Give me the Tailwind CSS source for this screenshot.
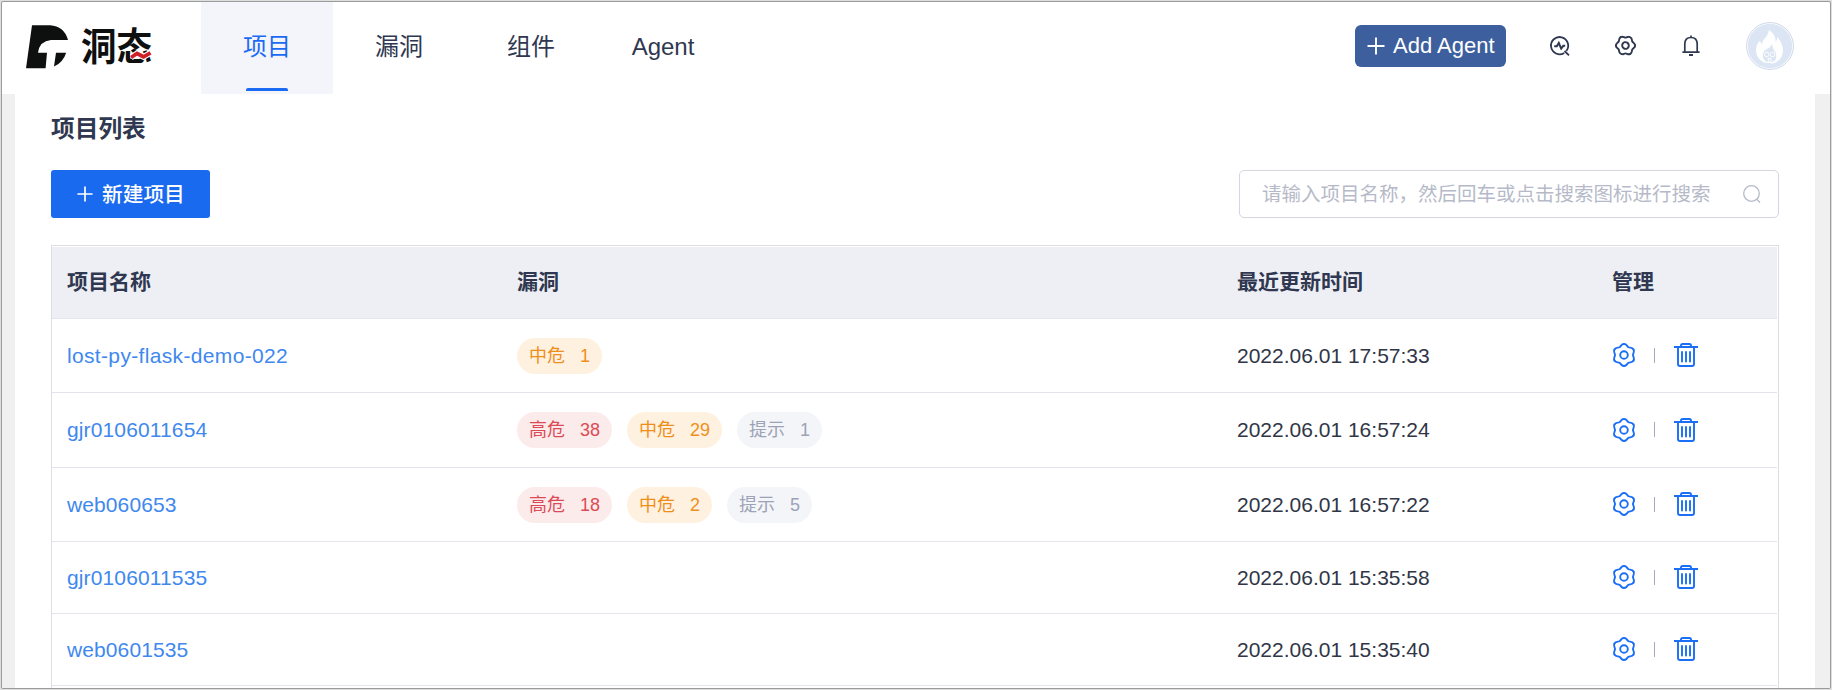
<!DOCTYPE html>
<html lang="zh-CN">
<head>
<meta charset="utf-8">
<title>洞态</title>
<script src="https://cdn.jsdelivr.net/npm/@tailwindcss/browser@4"></script>
</head>
<body class="h-[690px] w-[1832px] overflow-hidden bg-[#dedede] p-px font-['Liberation_Sans','Noto_Sans_CJK_SC',sans-serif] text-[#2f3850]">
<svg class="hidden">
  <symbol id="gear" viewBox="-12 -12 24 24"><g fill="none" stroke="currentColor" stroke-linecap="round">
    <path d="M0 -11C2.9 -11 2.94 -8.69 4.5 -7.79C6.06 -6.89 8.08 -8.01 9.53 -5.5"/>
    <path transform="rotate(60)" d="M0 -11C2.9 -11 2.94 -8.69 4.5 -7.79C6.06 -6.89 8.08 -8.01 9.53 -5.5"/>
    <path transform="rotate(120)" d="M0 -11C2.9 -11 2.94 -8.69 4.5 -7.79C6.06 -6.89 8.08 -8.01 9.53 -5.5"/>
    <path transform="rotate(180)" d="M0 -11C2.9 -11 2.94 -8.69 4.5 -7.79C6.06 -6.89 8.08 -8.01 9.53 -5.5"/>
    <path transform="rotate(240)" d="M0 -11C2.9 -11 2.94 -8.69 4.5 -7.79C6.06 -6.89 8.08 -8.01 9.53 -5.5"/>
    <path transform="rotate(300)" d="M0 -11C2.9 -11 2.94 -8.69 4.5 -7.79C6.06 -6.89 8.08 -8.01 9.53 -5.5"/>
    <circle r="3.8"/></g></symbol>
  <symbol id="trash" viewBox="0 0 26 26"><g fill="none" stroke="currentColor" stroke-width="1.9"><path d="M1 5H25M8 5V3.6Q8 2 9.6 2H16.4Q18 2 18 3.6V5M5 5V22Q5 24 7 24H19Q21 24 21 22V5"/><path d="M9 10V19.500M13 10V19.500M17 10V19.500" stroke-linecap="round"/></g></symbol>
  <symbol id="plus" viewBox="0 0 18 18"><path d="M9 .5V17.5M.5 9H17.5" fill="none" stroke="currentColor" stroke-width="1.9"/></symbol>
</svg>
<div class="flex h-[688px] flex-col overflow-hidden rounded-[2px] border border-[#9b9b9b] bg-white">
  <header class="flex h-[92px] shrink-0 items-center">
    <div class="mb-[3px] flex w-[199px] shrink-0 items-center pl-6">
      <svg class="h-11 w-[43px] shrink-0" viewBox="26 24 43 44" fill="#0d100f"><path d="M32 24.3H50Q64 25 68 39H51Q39.5 40 38 51.7H47L45.6 67.3H26Z"/><path d="M56 51.7H66.2Q63 61.5 54 65.6Z"/></svg>
      <div class="relative ml-3 h-11 w-[74px]">
        <div class="origin-center scale-y-[1.06] text-[35.5px] leading-[44px] font-bold whitespace-nowrap text-[#0d100f]">洞态</div>
        <svg class="absolute top-[25px] left-[49px] h-[10px] w-[22px]" viewBox="0 0 22 10"><path d="M1 7.5L7 3.5L13.5 6.8L20.5 2.8" fill="none" stroke="#fff" stroke-width="6"/><path d="M1 7.5L7 3.5L13.5 6.8L20.5 2.8" fill="none" stroke="#cf2029" stroke-width="3.8"/></svg>
      </div>
    </div>
    <nav class="flex h-full text-2xl">
      <a class="relative flex w-[132px] items-center justify-center bg-[#f4f5fa] pb-0.5 text-[#1a6af4]">项目<span class="absolute bottom-[3px] left-[45px] h-[3px] w-[42px] rounded-t-[2px] bg-[#1a6af4]"></span></a>
      <a class="flex w-[132px] items-center justify-center pb-0.5">漏洞</a>
      <a class="flex w-[132px] items-center justify-center pb-0.5">组件</a>
      <a class="flex w-[132px] items-center justify-center pb-0.5">Agent</a>
    </nav>
    <div class="mr-9 mb-[5px] ml-auto flex items-center">
      <button class="flex h-[42px] w-[151px] items-center rounded-md bg-[#3d5f9e] pl-3 text-[22px] whitespace-nowrap text-white"><svg class="mr-2 h-[18px] w-[18px] shrink-0"><use href="#plus"/></svg>Add Agent</button>
      <svg class="ml-[42px] h-6 w-6" viewBox="0 0 24 24" fill="none" stroke="currentColor" stroke-width="1.8"><path d="M16.2 18.9A8.6 8.6 0 1 1 18.4 16.9M16.5 17L21 21.3"/><path d="M6.2 12.3H8.8L10.8 9L13.2 14.6L15.3 11.8H17.2" stroke-width="2"/></svg>
      <svg class="ml-[43px] h-[21px] w-[21px] rotate-30 stroke-[2.2]"><use href="#gear"/></svg>
      <svg class="ml-[43px] h-6 w-6" viewBox="0 0 24 24" fill="none" stroke="currentColor" stroke-width="1.7"><path d="M3.4 18.2H20.6M5.8 18V10Q5.8 3.5 12 3.5T18.2 10V18M12 3.5V1.6"/><path d="M10 21.1H14" stroke-width="2"/></svg>
      <svg class="ml-[43px] h-12 w-12" viewBox="0 0 48 48"><circle cx="24" cy="24" r="23.4" fill="#fff" stroke="#ccd7e9"/><circle cx="24" cy="24" r="22.2" fill="#dbe5f3"/><path d="M23 8C28 12 30 15 29.5 20Q31.3 18.5 31.3 15Q36.5 21 37 28Q37 38 27 41.5L18 40.5Q9.500 36 10 27.500Q10.500 22 14 18.500Q14.500 21 16 22C17 16 22 15 23 8Z" fill="#fff"/><path d="M26 22Q27 28 30 31Q32 40 23.500 40.500Q15.500 39 17 31.500Q18 28 21 27Q25 25 26 22Z" fill="#dbe5f3"/><g fill="none" stroke="#fff" stroke-width=".9"><circle cx="20.800" cy="32.500" r="2.300"/><circle cx="26.500" cy="32.500" r="2.300"/><path d="M22.300 36.500H25V40H22.300Z"/></g></svg>
    </div>
  </header>
  <main class="mr-[15px] ml-[13px] min-h-0 flex-1 bg-white px-9 shadow-[-13px_0_0_#f0f0f0,15px_0_0_#f0f0f0]">
    <h1 class="pt-[18px] text-[23.7px] leading-[34px] font-bold">项目列表</h1>
    <div class="mt-6 flex justify-between">
      <button class="flex h-12 w-[159px] items-center rounded-[3px] bg-[#1a6af0] pl-[26px] text-[20.7px] font-medium whitespace-nowrap text-white"><svg class="mr-[9px] h-4 w-4 shrink-0"><use href="#plus"/></svg><span class="pt-px">新建项目</span></button>
      <div class="flex h-12 w-[540px] items-center rounded-[5px] border border-[#d4d6e0] pl-[22px] text-[19.5px] text-[#b6bac8]"><span class="pt-0.5">请输入项目名称，然后回车或点击搜索图标进行搜索</span><svg class="mr-4 ml-auto h-5 w-5" viewBox="0 0 20 20" fill="none" stroke="currentColor" stroke-width="1.3"><circle cx="9.500" cy="9.500" r="7.800"/><path d="M14.500 15L18 18.500"/></svg></div>
    </div>
    <div class="mt-[27px] h-[460px] border border-[#dcdde5] pt-px pr-px text-[21px] leading-6">
      <div class="grid h-[72px] grid-cols-[450px_720px_375px_1fr] items-center border-b border-[#e3e5ef] bg-[#eeeff4] pb-px font-bold *:pl-[15px]"><div>项目名称</div><div>漏洞</div><div>最近更新时间</div><div>管理</div></div>
      <div id="rows"></div>
    </div>
  </main>
</div>
<script>
const styles = {
  '高危': 'bg-[#fcebeb] text-[#db4b57]',
  '中危': 'bg-[#fff1e0] text-[#ee8f1c]',
  '提示': 'bg-[#f4f5f8] text-[#9ca3b7]'
};
const rows = [
  ['lost-py-flask-demo-022', [['中危', 1]], '2022.06.01 17:57:33', 'h-[74px]', 'tracking-[0.34px]'],
  ['gjr0106011654', [['高危', 38], ['中危', 29], ['提示', 1]], '2022.06.01 16:57:24', 'h-[75px]', 'tracking-[0.13px]'],
  ['web060653', [['高危', 18], ['中危', 2], ['提示', 5]], '2022.06.01 16:57:22', 'h-[74px]', 'tracking-[0.1px]'],
  ['gjr0106011535', [], '2022.06.01 15:35:58', 'h-[72px]', 'tracking-[0.13px]'],
  ['web0601535', [], '2022.06.01 15:35:40', 'h-[72px]', 'tracking-[0.1px]']
];
document.getElementById('rows').innerHTML = rows.map(([name, tags, time, h, tracking]) => `
<div class="${h} grid grid-cols-[450px_720px_375px_1fr] items-center border-b border-[#e3e4ed] *:pl-[15px]">
  <div class="${tracking} text-[#4088ee]">${name}</div>
  <div class="flex gap-[15px]">${tags.map(([t, n]) => `<span class="flex h-9 items-center gap-[15px] rounded-full px-3 text-[18px] ${styles[t]}"><span>${t}</span><span>${n}</span></span>`).join('')}</div>
  <div class="text-[#303646]">${time}</div>
  <div class="flex items-center pb-px text-[#1a6ff5]"><svg class="h-6 w-6 stroke-[1.9]"><use href="#gear"/></svg><span class="ml-[18px] h-[15px] w-px bg-[#a5abbd]"></span><svg class="ml-[18px] h-[26px] w-[26px]"><use href="#trash"/></svg></div>
</div>`).join('');
</script>
</body>
</html>
